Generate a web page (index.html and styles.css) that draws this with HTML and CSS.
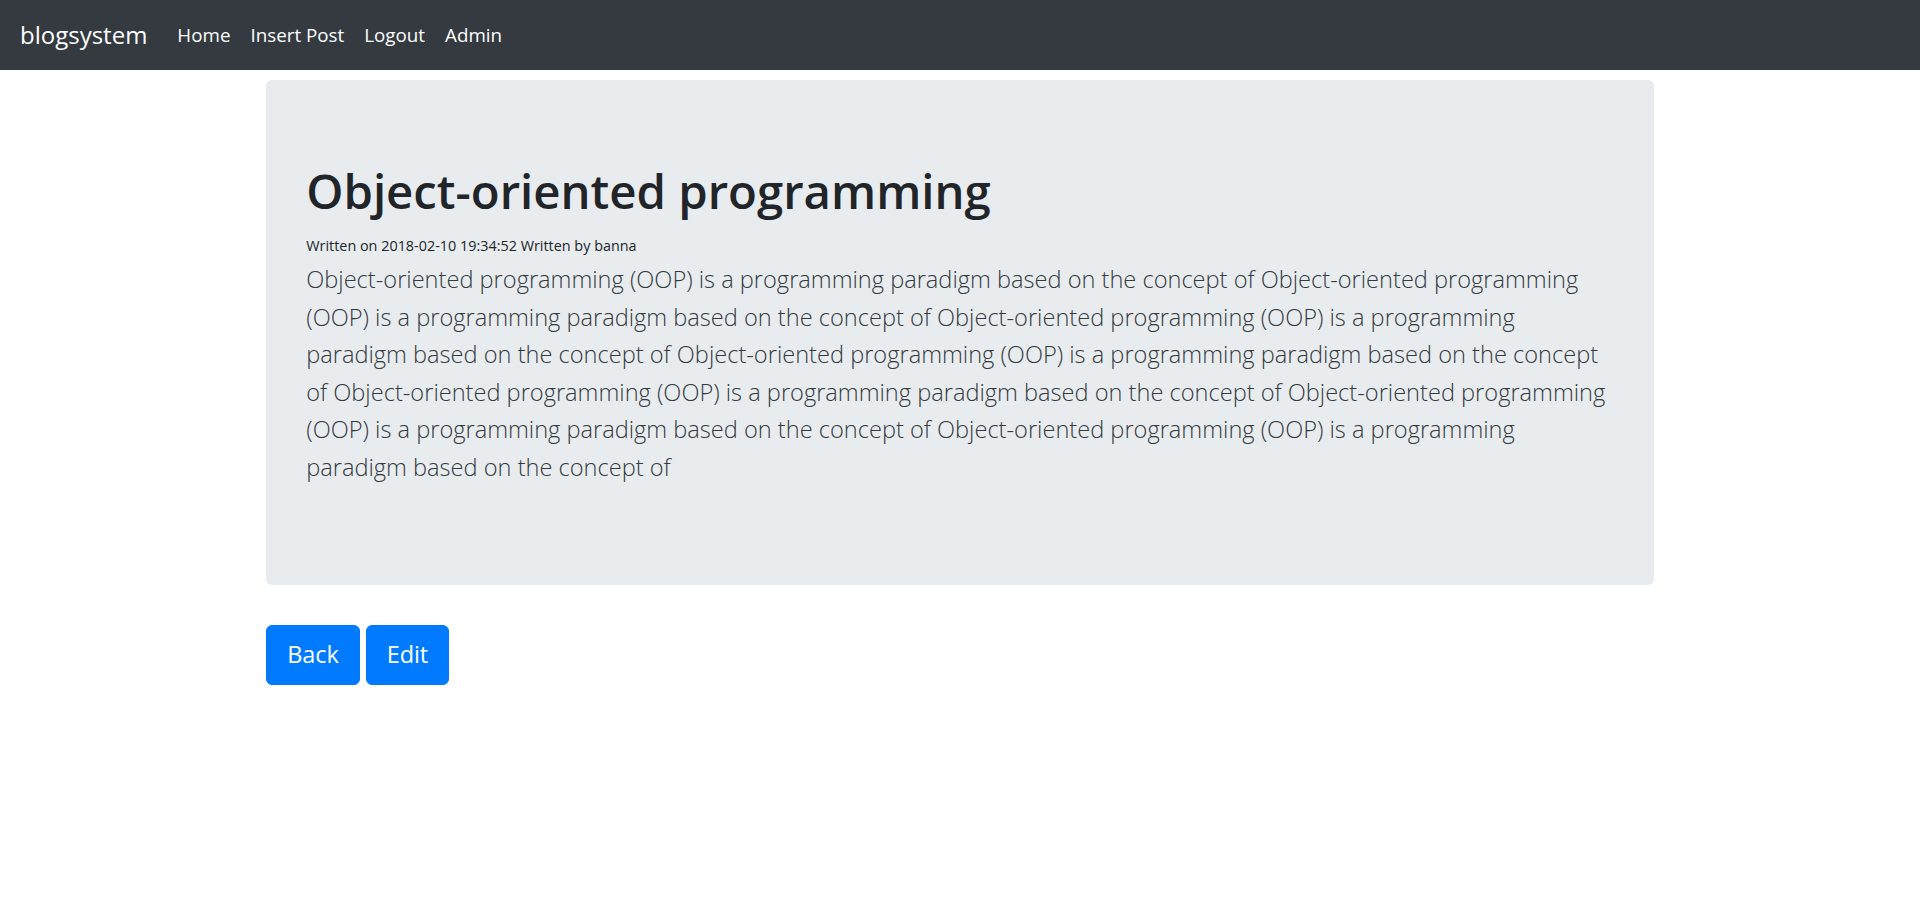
FILE: index.html
```html
<!DOCTYPE html>
<html lang="en">
<head>
<meta charset="utf-8">
<title>blogsystem</title>
<link rel="stylesheet" href="styles.css">
</head>
<body>
<nav class="navbar">
  <a class="brand" href="#">blogsystem</a>
  <ul class="nav">
    <li><a class="nav-link" href="#">Home</a></li>
    <li><a class="nav-link" href="#">Insert Post</a></li>
    <li><a class="nav-link" href="#">Logout</a></li>
    <li><a class="nav-link" href="#">Admin</a></li>
  </ul>
</nav>
<main class="container">
  <section class="jumbotron">
    <h1 class="title">Object-oriented programming</h1>
    <div class="meta">Written on 2018-02-10 19:34:52 Written by banna</div>
    <p class="lead">Object-oriented programming (OOP) is a programming paradigm based on the concept of Object-oriented programming (OOP) is a programming paradigm based on the concept of Object-oriented programming (OOP) is a programming paradigm based on the concept of Object-oriented programming (OOP) is a programming paradigm based on the concept of Object-oriented programming (OOP) is a programming paradigm based on the concept of Object-oriented programming (OOP) is a programming paradigm based on the concept of Object-oriented programming (OOP) is a programming paradigm based on the concept of</p>
  </section>
  <div class="actions">
    <a class="btn" href="#">Back</a>
    <a class="btn" href="#">Edit</a>
  </div>
</main>
</body>
</html>
```

FILE: styles.css
```css
* { box-sizing: border-box; }
html, body { margin: 0; padding: 0; }
body {
  font-family: "Open Sans", "Noto Sans", "Liberation Sans", sans-serif;
  font-size: 20px;
  line-height: 1.5;
  color: #212529;
  background: #fff;
}
.navbar {
  display: flex;
  align-items: center;
  height: 70px;
  padding: 10px 20px;
  background: #343a40;
}
.brand {
  font-size: 24px;
  line-height: 1.5;
  color: #fff;
  text-decoration: none;
  margin-right: 20px;
}
.nav {
  display: flex;
  list-style: none;
  margin: 0;
  padding: 0;
}
.nav-link {
  display: block;
  padding: 10px 10px;
  color: #fff;
  text-decoration: none;
  font-size: 18.8px;
}
.container {
  width: 1387.5px;
  margin: 0 auto;
  padding-top: 10px;
}
.jumbotron {
  background: #e9ecef;
  border-radius: 6px;
  padding: 81px 40px 79px;
  margin-bottom: 40px;
}
.title {
  margin: 0 0 10px;
  font-size: 47.3px;
  font-weight: 600;
  line-height: 60px;
  color: #212529;
}
.meta {
  font-size: 14.4px;
  line-height: 30px;
}
.lead {
  margin: 0 0 20px;
  font-size: 23.6px;
  font-weight: 300;
  line-height: 37.5px;
  color: #343a40;
}
.actions {
  display: flex;
  gap: 6px;
}
.btn {
  display: inline-block;
  padding: 10px 20px;
  font-size: 23.5px;
  line-height: 37.5px;
  color: #fff;
  background: #007bff;
  border: 1.25px solid #007bff;
  border-radius: 6px;
  text-decoration: none;
  letter-spacing: -0.1px;
}
```
